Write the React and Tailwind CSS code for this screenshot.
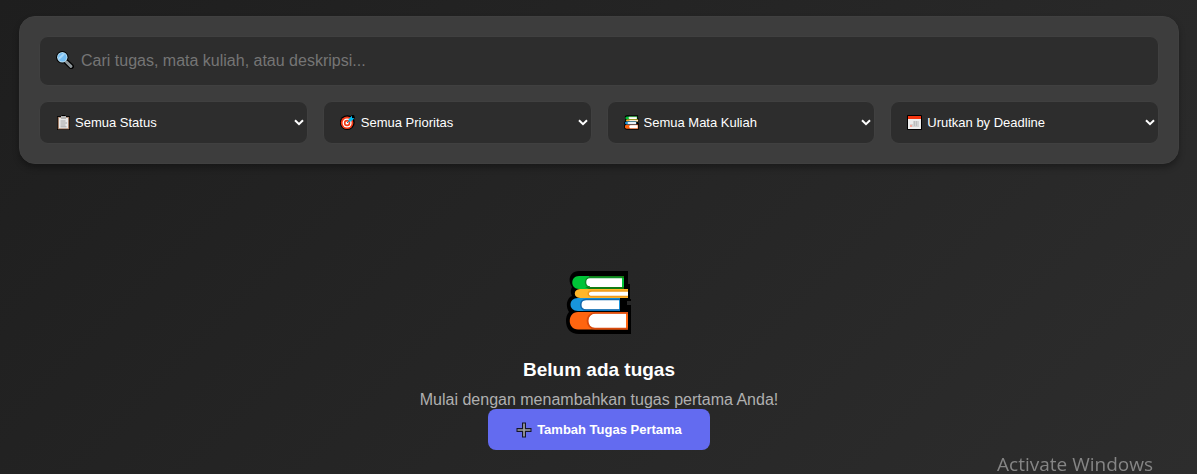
import { useState } from "react";

function SearchIcon({ className }) {
  return (
    <svg viewBox="0 0 18 18" className={className} aria-hidden="true">
      <path d="M10 10.5 15.3 15.5" stroke="#000" strokeWidth="5.2" strokeLinecap="round" />
      <circle cx="6.3" cy="6.3" r="6.2" fill="#000" />
      <path d="M10.5 11 15 15.3" stroke="#8f979b" strokeWidth="3" strokeLinecap="round" />
      <circle cx="6.3" cy="6.3" r="5.2" fill="#b5dbee" />
      <circle cx="6.3" cy="6.3" r="4.2" fill="#74bdf2" />
      <path d="M3.2 7.5 7.5 3.2" stroke="#a9d8f8" strokeWidth="2" strokeLinecap="round" />
    </svg>
  );
}

function ClipboardIcon({ className }) {
  return (
    <svg viewBox="0 0 15 15" className={className} aria-hidden="true">
      <path d="M1 1.3H5L6 0h3l1 1.3h4V15H1Z" fill="#000" />
      <rect x="1.8" y="2" width="11.400" height="12.3" fill="#a5816b" />
      <rect x="3" y="2.8" width="9" height="10.5" fill="#e9e9e9" />
      <rect x="5" y="1" width="5" height="3" fill="#b4b4b4" />
      <path d="M4.5 6h5M4.5 8h6.5M4.5 10h5M4.5 11.8h6" stroke="#a4a4a4" strokeWidth="1" />
    </svg>
  );
}

function TargetIcon({ className }) {
  return (
    <svg viewBox="0 0 15 15" className={className} aria-hidden="true">
      <circle cx="7.3" cy="7.6" r="7.4" fill="#000" />
      <path d="M8 3 12 0h2l1 3-5 5Z" fill="#000" />
      <circle cx="7.1" cy="7.8" r="6.3" fill="#f03a17" />
      <circle cx="7.1" cy="8" r="4.5" fill="#fff" />
      <circle cx="7.1" cy="8" r="3.2" fill="#f03a17" />
      <circle cx="7.1" cy="8" r="1.6" fill="#fff" />
      <path d="m7 8 3-3" stroke="#127a9c" strokeWidth="1" />
      <path d="M8.600 4 12 .8V3l2.4.2L11 6.500 8.600 6.500Z" fill="#00bcf2" />
    </svg>
  );
}

function BooksIcon({ className }) {
  return (
    <svg viewBox="0 0 66 65" className={className} aria-hidden="true">
      <path
        d="M13 1H62V14H64V29H65V31H61V35H65V64H13C4 64 0 58 0 51C0 46 2 43 3 42C-1 36 1 28 6 26C4 22 5 19 6 17C1 10 4 1 13 1Z"
        fill="#000"
      />
      <path d="M13 6H58V19H13C4 19 4 6 13 6Z" fill="#00c437" />
      <path d="M23 6H58V8H23ZM19 17H58V19H23Z" fill="#107c10" />
      <path d="M56 7.500H24C18 7.500 18 17 24 17H56Z" fill="#fff" />
      <path d="M56 7.500H24C18 7.500 18 17 24 17" fill="none" stroke="#108c28" strokeWidth="1.500" />
      <path d="M14 19H62V28H14C7 28 7 19 14 19Z" fill="#ffb62a" />
      <path d="M62 21H26C21 21 21 26.500 26 26.500H62Z" fill="#fff" />
      <path d="M62 21H26C21 21 21 26.500 26 26.500H62" fill="none" stroke="#f09a1b" strokeWidth="1.400" />
      <path d="M12 28H54V41H12C2 41 2 28 12 28Z" fill="#1895dc" />
      <path d="M53 30H20C13 30 13 39.500 20 39.500H53Z" fill="#fff" />
      <path d="M54 29.500H20C13 29.500 13 40 20 40H54" fill="none" stroke="#1369ad" strokeWidth="1.600" />
      <path d="M12 42H62V59.500H12C1 59.500 1 42 12 42Z" fill="#ff6510" />
      <path d="M60 43.500H29C20 43.500 20 58.500 29 58.500H60Z" fill="#fff" />
      <path d="M62 43H29C19 43 19 58.700 29 58.700H62" fill="none" stroke="#d94a0c" strokeWidth="1.700" />
    </svg>
  );
}

function CalendarIcon({ className }) {
  return (
    <svg viewBox="0 0 15 15" className={className} aria-hidden="true">
      <rect width="15" height="15" rx="1" fill="#000" />
      <rect x="1" y="1" width="13" height="13" fill="#ececec" />
      <rect x="1" y="1" width="13" height="3" fill="#f5350f" />
      <path d="M6 6h6v3H6ZM3 9h9v3H3Z" fill="#d2d2d2" />
      <path d="M7.500 6v5M9.500 6v5" stroke="#bdbdbd" strokeWidth="1" />
      <rect x="3" y="10" width="2" height="2" fill="#f4a394" />
    </svg>
  );
}

function PlusIcon({ className }) {
  return (
    <svg viewBox="0 0 16 16" className={className} aria-hidden="true">
      <path d="M6 .500h4V6h5.500v4H10v5.500H6V10H.500V6H6Z" fill="#14142a" />
      <path d="M8 1.500v13M1.500 8h13" stroke="#a3a3a3" strokeWidth="1.700" />
    </svg>
  );
}

const filters = [
  { id: "status", name: "Status", Icon: ClipboardIcon, label: "Semua Status", pad: "pl-[35px]" },
  { id: "priority", name: "Prioritas", Icon: TargetIcon, label: "Semua Prioritas", pad: "pl-[37px]" },
  { id: "course", name: "Mata kuliah", Icon: BooksIcon, label: "Semua Mata Kuliah", pad: "pl-[36px]" },
  { id: "sort", name: "Urutan", Icon: CalendarIcon, label: "Urutkan by Deadline", pad: "pl-[36px]" },
];

function FilterSelect({ id, name, Icon, label, pad }) {
  return (
    <div className="relative">
      <select
        id={id}
        aria-label={name}
        className={`block h-[43px] w-full appearance-none rounded-[9px] border border-[#404040] bg-[#2d2d2d] pr-6 text-[13px] font-medium text-white ${pad}`}
      >
        <option>{label}</option>
      </select>
      <Icon className="pointer-events-none absolute top-[14px] left-[17px] size-[15px]" />
      <svg
        viewBox="0 0 10 7"
        className="pointer-events-none absolute top-[18px] right-1 h-[7px] w-[10px]"
        aria-hidden="true"
      >
        <path d="m1 1.200 4 4 4-4" fill="none" stroke="#fff" strokeWidth="2" />
      </svg>
    </div>
  );
}

export default function App() {
  const [query, setQuery] = useState("");
  return (
    <div className="min-h-screen bg-linear-135 from-[#1e1e1e] to-[#2d2d2d] pt-4 pr-[18px] pb-6 pl-[19px] font-['Liberation_Sans',Arial,sans-serif]">
      <section className="flex flex-col gap-[15px] rounded-2xl border border-[#404040] bg-[#3d3d3d] p-[19px] shadow-[0_4px_6px_rgba(0,0,0,0.3)]">
        <div className="relative">
          <input
            type="search"
            aria-label="Cari tugas"
            value={query}
            onChange={(e) => setQuery(e.target.value)}
            placeholder="Cari tugas, mata kuliah, atau deskripsi..."
            className="block h-[50px] w-full rounded-[9px] border border-[#404040] bg-[#2d2d2d] pr-4 pl-[41px] text-base text-white placeholder:text-[#757575]"
          />
          <SearchIcon className="pointer-events-none absolute top-[15px] left-[17px] size-[18px]" />
        </div>
        <div className="grid grid-cols-4 gap-[15px]">
          {filters.map((filter) => (
            <FilterSelect key={filter.id} {...filter} />
          ))}
        </div>
      </section>

      <main className="flex flex-col items-center pt-[106px] text-center">
        <BooksIcon className="h-[65px] w-[66px]" />
        <h3 className="mt-[23px] text-[19px] leading-6 font-bold text-white">Belum ada tugas</h3>
        <p className="mt-[9px] text-base leading-[18px] text-[#b0b0b0]">Mulai dengan menambahkan tugas pertama Anda!</p>
        <button
          type="button"
          className="flex h-[41px] items-center gap-[5px] rounded-lg bg-[#636bf0] px-7 text-[13px] font-bold text-white"
        >
          <PlusIcon className="size-4" />
          Tambah Tugas Pertama
        </button>
      </main>

      <div className="pointer-events-none fixed right-[44px] bottom-0 font-['Open_Sans','Noto_Sans',sans-serif] text-[19px] leading-5 text-[#858585]">
        Activate Windows
      </div>
    </div>
  );
}
